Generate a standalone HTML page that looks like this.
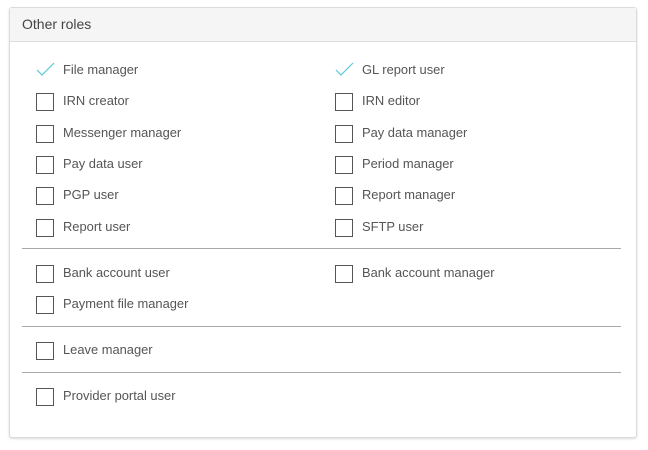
<!DOCTYPE html>
<html><head><style>
body{margin:0;width:648px;height:450px;background:#fff;font-family:"Liberation Sans",sans-serif;position:relative;overflow:hidden}
.card{position:absolute;left:9px;top:7px;width:626px;height:429px;border:1px solid #dcdcdc;border-radius:3px;box-shadow:0 1px 2px rgba(0,0,0,.15);background:#fff}
.hd{height:33px;background:#f5f5f5;border-bottom:1px solid #ddd;font-size:14px;color:#444;padding-left:12px;line-height:32px}
.it{position:absolute;font-size:12.9px;color:#555;line-height:18px}
.cb{position:absolute;width:16px;height:16px;border:1px solid #555;}
.hr{position:absolute;left:22px;width:599px;height:1px;background:#aaa}
</style></head><body>
<div class="card"><div class="hd">Other roles</div></div>
<div id="c"></div>
<script>
var L=[["File manager",36,70,1],["IRN creator",36,101],["Messenger manager",36,133],["Pay data user",36,164],["PGP user",36,195],["Report user",36,227],
["GL report user",335,70,1],["IRN editor",335,101],["Pay data manager",335,133],["Period manager",335,164],["Report manager",335,195],["SFTP user",335,227],
["Bank account user",36,273],["Bank account manager",335,273],["Payment file manager",36,304],["Leave manager",36,350],["Provider portal user",36,396]];
var h="";
L.forEach(function(a){
 if(a[3]) h+='<svg style="position:absolute;left:'+a[1]+'px;top:'+(a[2]-8)+'px" width="20" height="16"><path d="M1 8 L6 13 L18 1" fill="none" stroke="#5bc8d6" stroke-width="1.2"/></svg>';
 else h+='<div class="cb" style="left:'+a[1]+'px;top:'+(a[2]-8)+'px"></div>';
 h+='<div class="it" style="left:'+(a[1]+27)+'px;top:'+(a[2]-9)+'px">'+a[0]+'</div>';
});
[248,326,372].forEach(function(y){h+='<div class="hr" style="top:'+y+'px"></div>'});
document.getElementById("c").innerHTML=h;
</script>
</body></html>
